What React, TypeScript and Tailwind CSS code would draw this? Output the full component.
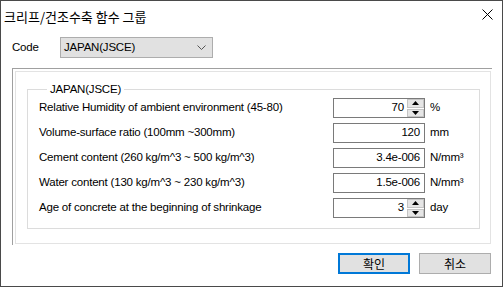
import React from "react";

const rows = [
  { label: "Relative Humidity of ambient environment (45-80)", value: "70", unit: "%", spin: true },
  { label: "Volume-surface ratio (100mm ~300mm)", value: "120", unit: "mm", spin: false },
  { label: "Cement content (260 kg/m^3 ~ 500 kg/m^3)", value: "3.4e-006", unit: "N/mm³", spin: false },
  { label: "Water content (130 kg/m^3 ~ 230 kg/m^3)", value: "1.5e-006", unit: "N/mm³", spin: false },
  { label: "Age of concrete at the beginning of shrinkage", value: "3", unit: "day", spin: true },
];

const Spinner = () => (
  <div className="flex flex-col w-[17px] h-[18px] gap-[1px]">
    <div className="flex-1 flex items-center justify-center bg-[#e5e5e5] border border-[#c4c4c4]">
      <svg width="7" height="4" viewBox="0 0 7 4">
        <path d="M3.5 0 L7 4 L0 4 Z" fill="#000" />
      </svg>
    </div>
    <div className="flex-1 flex items-center justify-center bg-[#e5e5e5] border border-[#c4c4c4]">
      <svg width="7" height="4" viewBox="0 0 7 4">
        <path d="M0 0 L7 0 L3.5 4 Z" fill="#000" />
      </svg>
    </div>
  </div>
);

export default function App() {
  return (
    <div
      className="w-[503px] h-[287px] bg-white border border-[#4a4a4a] flex flex-col text-black text-[11.5px] tracking-[-0.2px] leading-none"
      style={{ fontFamily: "'Liberation Sans', 'Noto Sans CJK KR', sans-serif" }}
    >
      {/* title bar */}
      <div className="h-[29px] flex items-center justify-between pl-[3px] pr-[9px] tracking-normal">
        <span className="text-[13px] mt-[1px]" style={{ fontFamily: "'Noto Sans CJK KR', sans-serif" }}>
          크리프/건조수축 함수 그룹
        </span>
        <svg width="11" height="11" viewBox="0 0 11 11" className="mb-[2px]">
          <path d="M0.5 0.5 L10.5 10.5 M10.5 0.5 L0.5 10.5" stroke="#000" strokeWidth="1" />
        </svg>
      </div>

      {/* code row */}
      <div className="flex items-center pl-[11px] mt-[7px] h-[21px]">
        <span className="w-[48px]">Code</span>
        <div className="w-[153px] h-[21px] bg-[#e1e1e1] border border-[#adadad] flex items-center justify-between pl-[3px] pr-[6px]">
          <span>JAPAN(JSCE)</span>
          <svg width="9" height="5" viewBox="0 0 9 5">
            <path d="M0.5 0.5 L4.5 4.5 L8.5 0.5" stroke="#555" strokeWidth="1" fill="none" />
          </svg>
        </div>
      </div>

      {/* sunken frame */}
      <div className="ml-[11px] mt-[10px] w-[480px] h-[177px] border-t border-l border-[#a0a0a0] pt-[2px] pl-[2px]">
        <div className="w-[476px] h-[173px] border border-[#e3e3e3] pt-[10px] pl-[11px] pr-[10px]">
          <fieldset className="border border-[#dcdcdc] h-[147px] pl-[11px] pt-[2px]">
            <legend className="ml-[8px] px-[3px] leading-[14px]">JAPAN(JSCE)</legend>
            <div className="flex flex-col gap-[5px]">
              {rows.map((r) => (
                <div key={r.label} className="flex items-center h-[20px]">
                  <span className="w-[294px]">{r.label}</span>
                  <div className="w-[92px] h-[20px] border border-[#7a7a7a] flex items-center justify-end">
                    <span className={r.spin ? "pr-[3px]" : "pr-[4px]"}>{r.value}</span>
                    {r.spin && <Spinner />}
                  </div>
                  <span className="ml-[5px]">{r.unit}</span>
                </div>
              ))}
            </div>
          </fieldset>
        </div>
      </div>

      {/* buttons */}
      <div className="flex justify-end gap-[9px] pr-[11px] mt-[8px] tracking-normal" style={{ fontFamily: "'Noto Sans CJK KR', sans-serif" }}>
        <button className="w-[72px] h-[21px] bg-[#e1e1e1] border-2 border-[#0078d7] text-[12px]">확인</button>
        <button className="w-[72px] h-[21px] bg-[#e1e1e1] border border-[#adadad] text-[12px]">취소</button>
      </div>
    </div>
  );
}
